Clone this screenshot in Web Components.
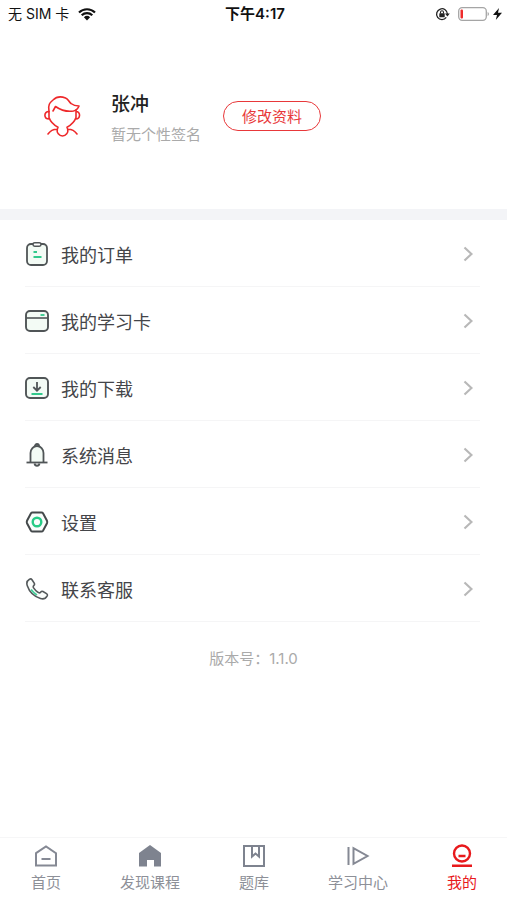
<!DOCTYPE html>
<html lang="zh-CN">
<head>
<meta charset="utf-8">
<meta name="viewport" content="width=device-width, initial-scale=1">
<title>我的</title>
<style>
html, body { margin: 0; height: 100%; }
body { background: #fff; font-family: "Noto Sans CJK SC", sans-serif; color: #444549; }
</style>
</head>
<body>
<profile-page></profile-page>

<script>
const define = (name, html, setup) => customElements.define(name, class extends HTMLElement {
  connectedCallback() {
    if (this.shadowRoot) return;
    const root = this.attachShadow({ mode: 'open' });
    root.innerHTML = html;
    if (setup) setup(this, root);
  }
});

const svg = (w, h, body) => `<svg width="${w}" height="${h}" viewBox="0 0 ${w} ${h}" fill="none" aria-hidden="true">${body}</svg>`;

const icons = {
  order: svg(24, 26, '<rect x="2" y="3" width="20" height="21" rx="4" fill="#f3fbf5" stroke="#505557" stroke-width="1.800"/><rect x="8" y="1.700" width="8" height="3.500" rx="1.700" fill="#fff" stroke="#505557" stroke-width="1.500"/><path d="M8.500 11h3.500M8.500 16h8" stroke="#31c98c" stroke-width="1.800"/>'),
  card: svg(24, 26, '<rect x="1" y="3" width="22" height="20" rx="4" fill="#f3fbf5" stroke="#505557" stroke-width="1.900"/><path d="M1 10h22" stroke="#505557" stroke-width="1.600"/><path d="M15.500 7h4" stroke="#31c98c" stroke-width="1.800"/>'),
  download: svg(24, 26, '<rect x="1" y="3" width="22" height="20" rx="4" fill="#f3fbf5" stroke="#505557" stroke-width="1.900"/><path d="M12 7v8.500M8.300 12l3.700 3.700 3.700-3.700" stroke="#505557" stroke-width="1.800"/><path d="M6.500 19h11" stroke="#31c98c" stroke-width="2"/>'),
  bell: svg(24, 26, '<path d="M5.500 20.500v-9.500a6.500 7 0 0 1 13 0v9.500" fill="#f3fbf5" stroke="#505557" stroke-width="1.800"/><path d="M1.500 20.500h21" stroke="#505557" stroke-width="1.800"/><path d="M10 4a2 2 0 0 1 4 0M9.500 21.500c.5 3 4.500 3 5 0" stroke="#505557" stroke-width="1.800"/>'),
  settings: svg(24, 26, '<path d="M7.500 3.500h9q1 0 1.500.8l4 7.500q.5 1.200 0 2.400l-4 7.500q-.5.8-1.500.8h-9q-1 0-1.500-.8l-4-7.500q-.5-1.200 0-2.400l4-7.500q.5-.8 1.500-.8z" fill="#f9fdfb" stroke="#44494b" stroke-width="2"/><circle cx="12" cy="13" r="4.300" stroke="#27cb86" stroke-width="2.400"/>'),
  phone: svg(24, 26, '<path d="M4.500 3.300C1.500 5 1.300 7 2.300 9.800 4.200 15.500 9 20.500 15.500 22.500 18.800 23.600 20.700 22.500 22.200 19.800 22.700 18.800 22.400 18.200 21.500 17.600L18 15.500C17 15 16.400 15.200 15.800 15.900 14.700 17.300 14 17.200 12.700 16.200 11 14.900 9.700 13.500 8.600 11.900 7.900 10.700 8 10.200 8.900 9.400 9.700 8.700 9.700 8 9.200 7.100L7 3.700C6.300 2.800 5.500 2.700 4.500 3.300z" fill="#fafdfb" stroke="#54595b" stroke-width="1.600"/><path d="M6 13.500q2.500 3.500 6 5.500" stroke="#43cf9a" stroke-width="1.800"/>'),
  home: svg(24, 24, '<path d="M2 9.200L12 2.500l10 6.700v12.300H2z" stroke="#858994" stroke-width="2"/><path d="M7.500 15h9" stroke="#858994" stroke-width="2"/>'),
  discover: svg(24, 24, '<path d="M12 1L23 9v13.500h-7V16H9v6.500H1V9z" fill="#7e838f"/>'),
  bank: svg(24, 24, '<path d="M2 2h20v20H2zM10 2v10.500l3.500-3 3.500 3V2" stroke="#7e838f" stroke-width="2"/>'),
  study: svg(24, 24, '<path d="M2.500 3v18M7.500 4.200v15.600L21.500 12z" stroke="#858994" stroke-width="2"/>'),
  mine: svg(24, 24, '<circle cx="12" cy="9.500" r="8" stroke="#e8191c" stroke-width="2.400"/><path d="M8.500 12h7M2 21.800h20" stroke="#e8191c" stroke-width="2.400"/>')
};

define('status-bar', `
<style>
:host { display: grid; grid-template-columns: 1fr auto 1fr; align-items: center; height: 28px; padding: 0 5px 0 8px; color: #111; font: 14px/20px Inter, "Noto Sans CJK SC", sans-serif; }
.side { display: flex; align-items: center; gap: 9px; }
.end { justify-content: flex-end; gap: 8px; }
.power { display: flex; align-items: center; gap: 4px; }
.time { font-size: 15px; font-weight: 600; }
svg { display: block; }
</style>
<div class="side"><span>无 SIM 卡</span>
${svg(18, 13, '<path d="M1 4.500a11.500 11.500 0 0 1 16 0M3.700 7.300a7.600 7.600 0 0 1 10.600 0" stroke="#111" stroke-width="2.200"/><path d="M5.900 9.300a4.500 4.500 0 0 1 6.200 0L9 12.500z" fill="#111"/>')}</div>
<span class="time">下午4:17</span>
<div class="side end">
${svg(15, 14, '<path d="M11.300 10.400A5.400 5.400 0 1 1 12.400 7" stroke="#222" stroke-width="1.300"/><path d="M10 6.500h4.800L12.400 9.500z" fill="#222"/><rect x="4.300" y="6.200" width="5.400" height="4" rx=".5" fill="#222"/><path d="M5.500 6.500V5.200a1.500 1.500 0 0 1 3 0v1.300" stroke="#222" stroke-width="1.100"/>')}
<div class="power">
${svg(31, 14, '<rect x=".7" y=".7" width="27.600" height="12.600" rx="3.500" stroke="#a5a5a5" stroke-width="1.300"/><path d="M29.600 5v4q1.400-.5 1.400-2t-1.400-2z" fill="#a5a5a5"/><rect x="2.500" y="2.500" width="2.500" height="9" rx="1" fill="#ee2b2b"/>')}
${svg(9, 14, '<path d="M6 1L0 8h4l-1.200 5L9 5.800H5z" fill="#111"/>')}</div>
</div>`);

define('profile-header', `
<style>
:host { display: flex; align-items: center; padding: 55px 40px 60px 42px; border-bottom: 11px solid #f3f4f7; }
.avatar { display: block; flex: none; margin-right: 28px; }
.info { margin-right: 22px; height: 66px; }
h1 { margin: 0; padding-top: 4px; font-size: 19px; line-height: 32px; font-weight: 500; color: #222; }
p { margin: 0; padding-top: 1px; font-size: 15px; line-height: 28px; color: #aaa; white-space: nowrap; }
button { box-sizing: border-box; width: 98px; height: 30px; padding: 0; border: 1px solid #e8383a; border-radius: 15px; background: #fff; color: #e8383a; font: 15px/28px "Noto Sans CJK SC", sans-serif; white-space: nowrap; }
svg { display: block; }
</style>
<div class="avatar">${svg(41, 44, '<g stroke="#ee292b" stroke-width="1.600" stroke-linejoin="round" stroke-linecap="round"><path d="M7 17.500C5.500 11 8 8.500 11 6 14 3 19 2.200 23.500 4 26.500 5.300 27 8 29 9.500 31.500 11.500 34 12 37 12 36 14.500 34 16.500 31.500 17 25 18 18.500 16 13.500 12.500L11 17"/><path d="M7 17.500C1.500 17.300 1.500 25 7.200 25M34 17.500C39 17.500 38.500 24.800 33.800 25M7 17.500V23.500C8.500 28 12 31 16 33.300L15.300 35.200Q9.500 35 6 40M34 16V23.500C32.500 28 29 31 25 33.300L25.700 35.200Q31.500 35 35 40M15.300 35.200C14.500 38.500 17 42 20.500 42S26.500 38.500 25.700 35.200"/></g>')}</div>
<div class="info"><h1><slot name="name"></slot></h1><p><slot name="bio"></slot></p></div>
<button type="button">修改资料</button>`);

define('menu-row', `
<style>
:host { display: block; margin: 0 27px 0 25px; border-bottom: 1px solid #f5f5f6; }
a { display: flex; align-items: center; height: 66px; padding-top: 2px; box-sizing: border-box; color: inherit; text-decoration: none; font-size: 18px; line-height: 26px; }
.label { flex: 1; padding: 0 0 1px 12px; }
.chevron { padding-right: 7px; }
svg { display: block; }
</style>
<a href="#"><span class="icon"></span><span class="label"><slot></slot></span>
<span class="chevron">${svg(10, 16, '<path d="M1.500 1.500L8.500 8l-7 6.500" stroke="#b8b8b8" stroke-width="2.200"/>')}</span></a>`,
(el, root) => { root.querySelector('.icon').innerHTML = icons[el.getAttribute('icon')]; });

define('tab-item', `
<style>
:host { display: block; width: 60px; color: #8d9098; }
:host([active]) { color: #e8191c; }
a { display: flex; flex-direction: column; align-items: center; gap: 2px; padding-top: 6px; color: inherit; text-decoration: none; font-size: 15px; line-height: 24px; white-space: nowrap; }
svg { display: block; }
</style>
<a href="#"><span class="icon"></span><span><slot></slot></span></a>`,
(el, root) => {
  root.querySelector('.icon').innerHTML = icons[el.getAttribute('icon')];
  if (el.hasAttribute('active')) root.querySelector('a').setAttribute('aria-current', 'page');
});

define('tab-bar', `
<style>
:host { display: block; border-top: 1px solid #f6f6f7; background: #fff; }
nav { display: flex; justify-content: space-between; padding: 0 15px 6px 16px; }
</style>
<nav aria-label="主导航"><slot></slot></nav>`);

define('profile-page', `
<style>
:host { display: flex; flex-direction: column; min-height: 100%; }
main { flex: 1; }
.version { margin: 0; padding-top: 25px; text-align: center; font-family: Inter, "Noto Sans CJK SC", sans-serif; font-size: 15px; line-height: 24px; color: #aaa; }
</style>
<status-bar></status-bar>
<main>
<profile-header><span slot="name">张冲</span><span slot="bio">暂无个性签名</span></profile-header>
<menu-row icon="order">我的订单</menu-row>
<menu-row icon="card">我的学习卡</menu-row>
<menu-row icon="download">我的下载</menu-row>
<menu-row icon="bell">系统消息</menu-row>
<menu-row icon="settings">设置</menu-row>
<menu-row icon="phone">联系客服</menu-row>
<p class="version">版本号：1.1.0</p>
</main>
<tab-bar>
<tab-item icon="home">首页</tab-item>
<tab-item icon="discover">发现课程</tab-item>
<tab-item icon="bank">题库</tab-item>
<tab-item icon="study">学习中心</tab-item>
<tab-item icon="mine" active>我的</tab-item>
</tab-bar>`);
</script>
</body>
</html>
